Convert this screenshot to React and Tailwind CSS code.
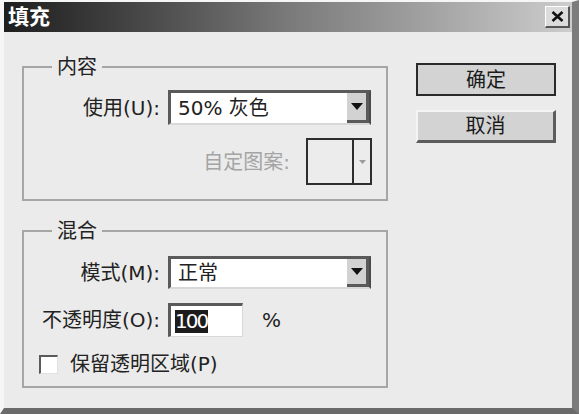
import React from "react";

const font = { fontFamily: '"DejaVu Sans", "Noto Sans CJK SC", sans-serif' };

function Triangle({ className = "" }) {
  return (
    <svg width="12" height="7" viewBox="0 0 12 7" className={className}>
      <path d="M0 0 H12 L6 7 Z" fill="currentColor" />
    </svg>
  );
}

function Select({ value, h }) {
  return (
    <div className={`w-[203px] ${h} flex bg-white border-t-[3px] border-l-[3px] border-t-[#5a5a5a] border-l-[#5a5a5a] border-r-[2px] border-b-[2px] border-r-[#4a4a4a] border-b-[#d8d8d8]`}>
      <div className="flex-1 flex items-center pl-[7px] text-[20px] text-[#222] leading-none">{value}</div>
      <div className="w-[22px] flex items-center justify-center bg-[#d2d2d2] border-r-[3px] border-b-[3px] border-r-[#5a5a5a] border-b-[#5a5a5a] text-[#111]">
        <Triangle />
      </div>
    </div>
  );
}

export default function App() {
  return (
    <div
      style={font}
      className="w-[579px] h-[414px] bg-[#ebebeb] flex flex-col border-l-[4px] border-l-[#f6f6f6] border-t-[2px] border-t-[#f6f6f6] border-r-[7px] border-r-[#7c7c7c] border-b-[6px] border-b-[#6a6a6a] overflow-hidden"
    >
      {/* Title bar */}
      <div className="h-[30px] flex items-center justify-between pl-[4px] pr-[2px] bg-gradient-to-r from-[#1e1e1e] via-[#7a7a7a] to-[#cdcdcd]">
        <span className="text-white font-bold text-[21px] leading-none">填充</span>
        <div className="w-[25px] h-[22px] flex items-center justify-center bg-[#dcdcdc] border-t border-l border-t-white border-l-white border-r-[2px] border-b-[2px] border-r-[#555] border-b-[#555]">
          <svg width="13" height="11" viewBox="0 0 13 11">
            <path d="M1.5 1 L11.5 10 M11.5 1 L1.5 10" stroke="#111" strokeWidth="2.6" />
          </svg>
        </div>
      </div>

      {/* Body */}
      <div className="flex flex-1">
        <div className="pl-[18px] pt-[24px] flex flex-col gap-[19px]">
          {/* 内容 */}
          <fieldset className="w-[366px] h-[145px] border-2 border-[#a6a6a6] px-0 pb-[14px]">
            <legend className="ml-[28px] px-[5px] text-[20px] leading-[22px] text-[#222]">内容</legend>
            <div className="flex flex-col gap-[13px] pt-[12px]">
              <div className="flex items-center pr-[15px] justify-end">
                <span className="text-[20px] text-[#222] leading-none mr-[8px]">使用(U):</span>
                <Select value="50% 灰色" h="h-[35px]" />
              </div>
              <div className="flex items-center pr-[14px] justify-end">
                <span className="text-[20px] text-[#a4a4a4] leading-none mr-[16px]">自定图案:</span>
                <div className="w-[66px] h-[47px] flex border-2 border-[#2e2e2e] bg-[#ececec]">
                  <div className="flex-1 border-r-2 border-r-[#2e2e2e]"></div>
                  <div className="w-[16px] flex items-center justify-center text-[#9a9a9a]">
                    <svg width="7" height="4" viewBox="0 0 7 4"><path d="M0 0 H7 L3.5 4 Z" fill="currentColor" /></svg>
                  </div>
                </div>
              </div>
            </div>
          </fieldset>

          {/* 混合 */}
          <fieldset className="w-[366px] h-[168px] border-2 border-[#a6a6a6] px-0">
            <legend className="ml-[28px] px-[5px] text-[20px] leading-[22px] text-[#222]">混合</legend>
            <div className="flex flex-col pt-[14px]">
              <div className="flex items-center pr-[15px] justify-end h-[33px]">
                <span className="text-[20px] text-[#222] leading-none mr-[8px]">模式(M):</span>
                <Select value="正常" h="h-[33px]" />
              </div>
              <div className="flex items-center mt-[14px] h-[34px]">
                <span className="w-[136px] text-right text-[20px] text-[#222] leading-none mr-[8px] whitespace-nowrap">不透明度(O):</span>
                <div className="w-[75px] h-[34px] flex items-center bg-white border-t-[3px] border-l-[3px] border-t-[#5a5a5a] border-l-[#5a5a5a] border-r border-b border-r-[#d8d8d8] border-b-[#d8d8d8] pl-[4px]">
                  <span className="bg-[#1c1c1c] text-white text-[20px] leading-[23px] pr-[1px] tracking-[-2px]">100</span>
                </div>
                <span className="ml-[19px] text-[20px] text-[#222] leading-none">%</span>
              </div>
              <div className="flex items-center mt-[17px] pl-[15px]">
                <div className="w-[19px] h-[19px] bg-white border-t-2 border-l-2 border-t-[#5a5a5a] border-l-[#5a5a5a] border-r border-b border-r-[#e0e0e0] border-b-[#e0e0e0]"></div>
                <span className="ml-[12px] text-[20px] text-[#222] leading-none">保留透明区域(P)</span>
              </div>
            </div>
          </fieldset>
        </div>

        {/* Buttons */}
        <div className="ml-[28px] pt-[31px] flex flex-col gap-[14px]">
          <div className="w-[140px] h-[33px] flex items-center justify-center bg-[#d3d3d3] border-2 border-[#2a2a2a] text-[20px] text-[#1a1a1a] leading-none">
            确定
          </div>
          <div className="w-[140px] h-[33px] flex items-center justify-center bg-[#d3d3d3] border-t-2 border-l-2 border-t-[#f4f4f4] border-l-[#f4f4f4] border-r-[3px] border-b-[3px] border-r-[#5c5c5c] border-b-[#5c5c5c] text-[20px] text-[#1a1a1a] leading-none">
            取消
          </div>
        </div>
      </div>
    </div>
  );
}
